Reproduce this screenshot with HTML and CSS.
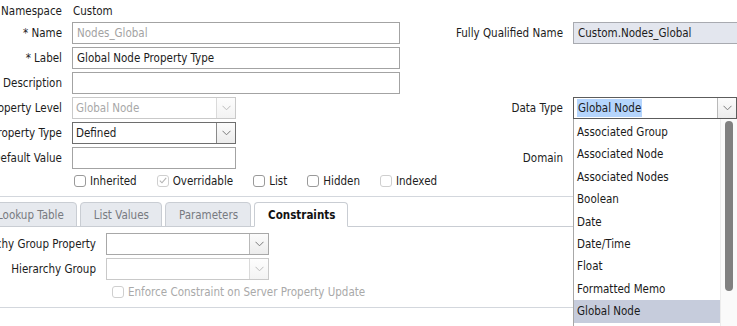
FILE: index.html
```html
<!DOCTYPE html>
<html>
<head>
<meta charset="utf-8">
<link rel="stylesheet" href="styles.css">
</head>
<body>
<div class="page">
  <section class="top">
    <div class="grid">
      <div class="lbl">Namespace</div>
      <div class="plain">Custom</div>
      <div></div><div></div>

      <div class="lbl">* Name</div>
      <div class="box wide disabled-text">Nodes_Global</div>
      <div class="lbl">Fully Qualified Name</div>
      <div class="box readonly">Custom.Nodes_Global</div>

      <div class="lbl">* Label</div>
      <div class="box wide">Global Node Property Type</div>
      <div></div><div></div>

      <div class="lbl">Description</div>
      <div class="box wide"></div>
      <div></div><div></div>

      <div class="lbl">Property Level</div>
      <div class="select short disabled"><span class="sel-text">Global Node</span><span class="arrow"><svg width="9" height="6" viewBox="0 0 9 6"><path d="M0.5 0.8 L4.5 4.8 L8.5 0.8" fill="none" stroke="currentColor" stroke-width="1"/></svg></span></div>
      <div class="lbl">Data Type</div>
      <div class="select focus dd-host"><span class="sel-text"><span class="hl">Global Node</span></span><span class="arrow"><svg width="9" height="6" viewBox="0 0 9 6"><path d="M0.5 0.8 L4.5 4.8 L8.5 0.8" fill="none" stroke="currentColor" stroke-width="1"/></svg></span>
        <div class="dropdown">
          <ul class="options">
            <li>Associated Group</li>
            <li>Associated Node</li>
            <li>Associated Nodes</li>
            <li>Boolean</li>
            <li>Date</li>
            <li>Date/Time</li>
            <li>Float</li>
            <li>Formatted Memo</li>
            <li class="selected">Global Node</li>
          </ul>
          <div class="scrollbar"><div class="thumb"></div></div>
        </div>
      </div>

      <div class="lbl">Property Type</div>
      <div class="select short dark"><span class="sel-text">Defined</span><span class="arrow"><svg width="9" height="6" viewBox="0 0 9 6"><path d="M0.5 0.8 L4.5 4.8 L8.5 0.8" fill="none" stroke="currentColor" stroke-width="1"/></svg></span></div>
      <div></div><div></div>

      <div class="lbl">Default Value</div>
      <div class="box short"></div>
      <div class="lbl">Domain</div>
      <div></div>

      <div class="checks">
        <label class="chk"><span class="cb"></span>Inherited</label>
        <label class="chk"><span class="cb dis"><svg width="8" height="7" viewBox="0 0 8 7"><path d="M0.8 3.6 L3 5.8 L7.2 0.8" fill="none" stroke="#b4b4b4" stroke-width="1.1"/></svg></span>Overridable</label>
        <label class="chk"><span class="cb"></span>List</label>
        <label class="chk"><span class="cb"></span>Hidden</label>
        <label class="chk"><span class="cb dis"></span>Indexed</label>
      </div>
    </div>
  </section>

  <nav class="tabs">
    <div class="tab">Lookup Table</div>
    <div class="tab">List Values</div>
    <div class="tab">Parameters</div>
    <div class="tab active">Constraints</div>
  </nav>

  <section class="constraints">
    <div class="cgrid">
      <div class="lbl">Hierarchy Group Property</div>
      <div class="select cshort"><span class="sel-text"></span><span class="arrow"><svg width="9" height="6" viewBox="0 0 9 6"><path d="M0.5 0.8 L4.5 4.8 L8.5 0.8" fill="none" stroke="currentColor" stroke-width="1"/></svg></span></div>
      <div class="lbl">Hierarchy Group</div>
      <div class="select cshort disabled"><span class="sel-text"></span><span class="arrow"><svg width="9" height="6" viewBox="0 0 9 6"><path d="M0.5 0.8 L4.5 4.8 L8.5 0.8" fill="none" stroke="currentColor" stroke-width="1"/></svg></span></div>
      <label class="chk enforce"><span class="cb dis"></span>Enforce Constraint on Server Property Update</label>
    </div>
  </section>
</div>
</body>
</html>
```

FILE: styles.css
```css
html, body {
  margin: 0;
  padding: 0;
  overflow: hidden;
  background: #ffffff;
}
body {
  font-family: "DejaVu Sans Condensed", "DejaVu Sans", sans-serif;
  font-size: 11.5px;
  color: #1c1c1c;
  width: 737px;
  height: 326px;
}
.page {
  width: 737px;
  height: 326px;
  overflow: hidden;
}
.top {
  padding-top: 3px;
  padding-bottom: 10px;
  border-bottom: 1px solid #d3d7dd;
}
.grid {
  display: grid;
  grid-template-columns: 62px 328px 153px 164px;
  grid-template-rows: 16px repeat(6, 22px) 14px;
  column-gap: 10px;
  row-gap: 3px;
}
.lbl {
  display: flex;
  justify-content: flex-end;
  align-items: center;
  white-space: nowrap;
}
.plain {
  display: flex;
  align-items: center;
  padding-left: 1px;
}
.box {
  box-sizing: border-box;
  height: 22px;
  border: 1px solid #a3a3a3;
  background: #fff;
  display: flex;
  align-items: center;
  padding-left: 4px;
  white-space: nowrap;
  overflow: hidden;
}
.box.wide { width: 328px; }
.box.short { width: 164px; }
.disabled-text { color: #a3a3a3; }
.box.readonly {
  background: #e3e6ee;
  border-color: #a8aab0;
  width: 170px;
}
.select {
  box-sizing: border-box;
  height: 22px;
  width: 164px;
  border: 1px solid #a8a8a8;
  background: #fff;
  display: flex;
  align-items: stretch;
  position: relative;
}
.select.short { width: 164px; }
.select.cshort { width: 163px; }
.select.dark { border-color: #6e6e6e; }
.select.focus { border-color: #5c5c5c; }
.sel-text {
  flex: 1;
  display: flex;
  align-items: center;
  padding-left: 3px;
  white-space: nowrap;
}
.hl {
  background: #b5d5fd;
  padding: 2px 1px;
}
.arrow {
  width: 18px;
  border-left: 1px solid #b9b9b9;
  background: linear-gradient(#fbfbfb, #ececec);
  display: flex;
  align-items: center;
  justify-content: center;
  color: #7a7a7a;
}
.select.disabled {
  border-color: #c9c9c9;
  color: #a8a8a8;
}
.select.disabled .arrow {
  border-left-color: #dadada;
  background: linear-gradient(#fdfdfd, #f3f3f3);
  color: #bcbcbc;
}
.select.dark .arrow { border-left-color: #8a8a8a; }

.dd-host { z-index: 5; }
.dropdown {
  position: absolute;
  left: -1px;
  top: 21px;
  width: 164px;
  height: 208px;
  box-sizing: border-box;
  border-left: 1px solid #a8a8a8;
  background: #fff;
  display: flex;
  z-index: 10;
  overflow: hidden;
}
.options {
  list-style: none;
  margin: 0;
  padding: 2px 0 0 0;
  flex: 1;
}
.options li {
  height: 22.4px;
  line-height: 22.4px;
  padding-left: 3px;
  white-space: nowrap;
  color: #1a1a1a;
}
.options li.selected {
  background: #c6ccdc;
}
.scrollbar {
  width: 16px;
  border-left: 1px solid #ececec;
  background: #fafafa;
  display: flex;
  justify-content: center;
  padding-top: 2px;
}
.thumb {
  width: 8px;
  height: 170px;
  border-radius: 4px;
  background: #808080;
}

.checks {
  grid-column: 2 / span 3;
  display: flex;
  align-items: center;
  gap: 20px;
  padding-left: 2px;
  margin-top: 3px;
}
.chk {
  display: flex;
  align-items: center;
  gap: 4px;
  white-space: nowrap;
}
.cb {
  box-sizing: border-box;
  flex-shrink: 0;
  width: 12px;
  height: 12px;
  border: 1px solid #9a9a9a;
  border-radius: 3px;
  background: #fff;
  display: flex;
  align-items: center;
  justify-content: center;
}
.cb.dis {
  border-color: #cfcfcf;
}

.tabs {
  display: flex;
  gap: 3px;
  margin-top: 5px;
  margin-left: -17px;
  height: 24px;
  border-bottom: 1px solid #c9cdd3;
}
.tab {
  box-sizing: border-box;
  height: 25px;
  padding: 0 12px 0 13px;
  display: flex;
  align-items: center;
  background: #e6e9ee;
  border: 1px solid #c9cdd3;
  border-radius: 4px 4px 0 0;
  color: #777a80;
  white-space: nowrap;
}
.tab.active {
  background: #fff;
  border-bottom-color: #fff;
  color: #111;
  font-weight: bold;
}

.constraints {
  padding-top: 6px;
  padding-bottom: 10px;
  border-bottom: 1px solid #d3d7dd;
}
.cgrid {
  display: grid;
  grid-template-columns: 96px 163px;
  grid-template-rows: 22px 22px 14px;
  column-gap: 10px;
  row-gap: 3px;
}
.enforce {
  grid-column: 2 / span 1;
  margin-left: 6px;
  margin-top: 3px;
  color: #a9a9a9;
}
```
